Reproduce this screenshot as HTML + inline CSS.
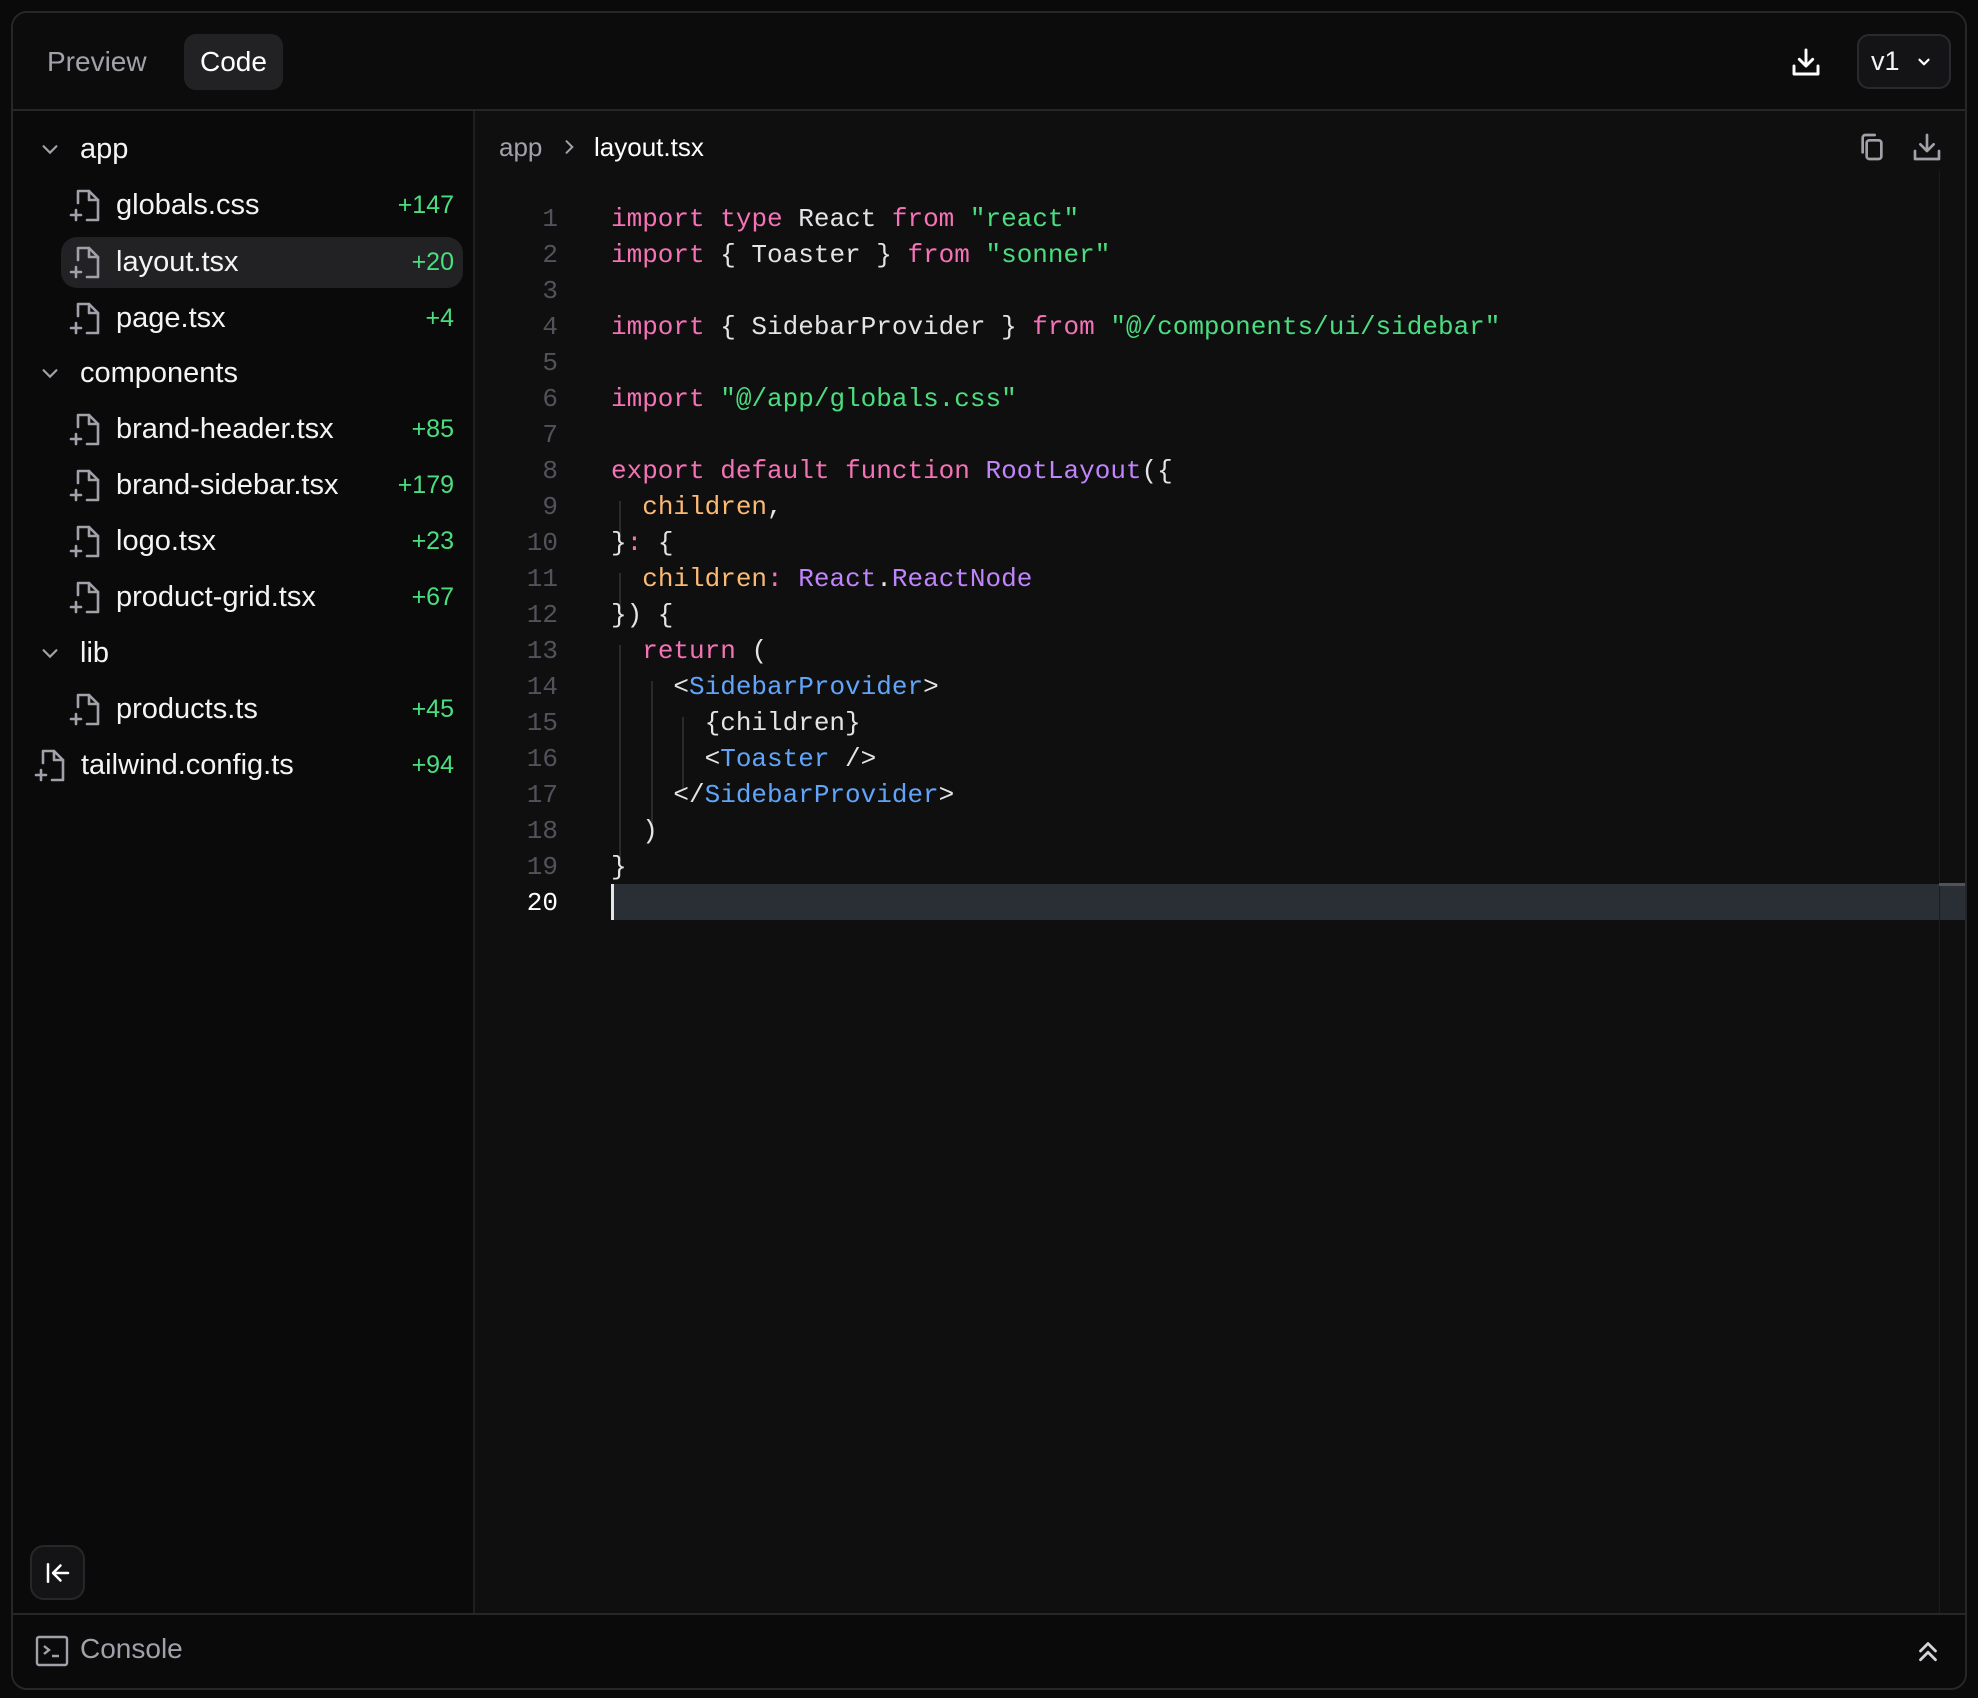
<!DOCTYPE html>
<html><head><meta charset="utf-8"><style>
*{margin:0;padding:0;box-sizing:border-box}
body{width:1978px;height:1698px;background:#0a0a0a;font-family:"Liberation Sans",sans-serif;color:#f4f4f5;position:relative;overflow:hidden}
.frame{position:absolute;left:11px;top:11px;width:1956px;height:1679px;border:2px solid #27272a;border-radius:16px;background:#0a0a0a;overflow:hidden}
.top{position:absolute;left:0;top:0;right:0;height:98px;border-bottom:2px solid #27272a;background:#0c0c0c}
.tab{position:absolute;top:21px;height:56px;line-height:56px;font-size:28px;padding:0 16px;border-radius:12px}
.side{position:absolute;left:0;top:98px;width:462px;bottom:75px;border-right:2px solid #1f1f22;background:#0a0a0a}
.code{position:absolute;left:462px;top:98px;right:0;bottom:75px;background:#0f0f0f}
.bot{position:absolute;left:0;right:0;bottom:0;height:75px;border-top:2px solid #27272a;background:#0a0a0a}
.row{position:absolute;left:0;width:462px;height:50px;font-size:29px;line-height:50px}
.row .n{position:absolute;right:21px;color:#4ade80;font-size:25px}
.sel{position:absolute;left:48px;width:402px;height:51px;background:#222224;border-radius:16px}
.ln{position:absolute;width:83px;left:0;text-align:right;font-family:"Liberation Mono",monospace;font-size:26px;color:#52525b}
.cl{position:absolute;left:136px;font-family:"Liberation Mono",monospace;font-size:26px;white-space:pre;color:#e4e4e7}
.k{color:#f472b6}.s{color:#4ade80}.o{color:#fdba74}.p{color:#c084fc}.b{color:#60a5fa}
.g{position:absolute;width:2px;background:#2a2a2e}
.fi{position:absolute;top:9px}
</style></head><body>
<div class="frame">
 <div class="top">
  <div class="tab" style="left:18px;color:#a1a1aa">Preview</div>
  <div class="tab" style="left:171px;background:#222224;color:#fff">Code</div>
  <svg style="position:absolute;left:1777px;top:33px" width="32" height="32" viewBox="0 0 24 24" fill="none" stroke="#fff" stroke-width="2.2" stroke-linecap="round" stroke-linejoin="round"><path d="M12 3v12M7 10l5 5 5-5M3 15v6h18v-6"/></svg>
  <div style="position:absolute;left:1844px;top:21px;width:94px;height:55px;border:2px solid #2a2a2e;border-radius:12px;background:#141416;font-size:27px;line-height:51px;padding-left:12px">v1<svg style="position:absolute;left:56px;top:17px" width="18" height="18" viewBox="0 0 24 24" fill="none" stroke="#fff" stroke-width="3" stroke-linecap="round" stroke-linejoin="round"><path d="M6 9l6 6 6-6"/></svg></div>
 </div>
 <div class="side" id="side">
  <div class="sel" style="top:126px"></div>
  <div style="position:absolute;left:17px;top:1434px;width:55px;height:55px;border:2px solid #27272a;border-radius:14px;background:#141416"><svg style="position:absolute;left:11px;top:11px" width="30" height="30" viewBox="0 0 24 24" fill="none" stroke="#fff" stroke-width="2" stroke-linecap="round" stroke-linejoin="round"><path d="M4 5v14M20 12H9M14 6l-6 6 6 6"/></svg></div>
 </div>
 <div class="code">
  <div style="position:absolute;left:24px;top:20px;font-size:26px;line-height:32px;color:#a1a1aa">app</div>
  <svg style="position:absolute;left:84px;top:26px" width="20" height="20" viewBox="0 0 24 24" fill="none" stroke="#a1a1aa" stroke-width="2.4" stroke-linecap="round"><path d="M9 5l7 7-7 7"/></svg>
  <div style="position:absolute;left:119px;top:20px;font-size:26px;line-height:32px;color:#fff">layout.tsx</div>
  <svg style="position:absolute;left:1381px;top:20px" width="32" height="32" viewBox="0 0 24 24" fill="none" stroke="#a1a1aa" stroke-width="2" stroke-linecap="round" stroke-linejoin="round"><rect x="8" y="7" width="11" height="14" rx="2"/><path d="M5 16V5a2 2 0 0 1 2-2h7"/></svg>
  <svg style="position:absolute;left:1436px;top:20px" width="32" height="32" viewBox="0 0 24 24" fill="none" stroke="#a1a1aa" stroke-width="2" stroke-linecap="round" stroke-linejoin="round"><path d="M12 3v12M7 10l5 5 5-5M3 15v6h18v-6"/></svg>
  <div style="position:absolute;left:136px;top:773px;width:1366px;height:36px;background:#2a2e35"></div>
  <div style="position:absolute;left:136px;top:773px;width:3px;height:36px;background:#e4e4e7"></div>
  <div style="position:absolute;right:0;top:60px;width:26px;bottom:0;border-left:1px solid #1c1c1f"></div>
  <div style="position:absolute;right:0;top:772px;width:26px;height:3px;background:#52525b"></div>
  <div class="g" style="left:144px;top:390px;height:36px"></div>
  <div class="g" style="left:144px;top:462px;height:36px"></div>
  <div class="g" style="left:144px;top:534px;height:216px"></div>
  <div class="g" style="left:176px;top:570px;height:144px"></div>
  <div class="g" style="left:207px;top:606px;height:72px"></div>
  <div id="lines"></div>
 </div>
 <div class="bot">
  <svg style="position:absolute;left:22px;top:20px" width="34" height="32" viewBox="0 0 34 32" fill="none" stroke="#a1a1aa" stroke-width="2.4"><rect x="2" y="2" width="30" height="28" rx="2"/><path d="M9 11l5 4-5 4M17 21h7"/></svg>
  <div style="position:absolute;left:67px;top:18px;font-size:28px;color:#a1a1aa">Console</div>
  <svg style="position:absolute;left:1900px;top:21px" width="30" height="30" viewBox="0 0 24 24" fill="none" stroke="#d4d4d8" stroke-width="2.2" stroke-linecap="round" stroke-linejoin="round"><path d="M6 12l6-6 6 6M6 19l6-6 6 6"/></svg>
 </div>
</div>
<script>
var F='<svg class="fi" style="left:XXpx" width="32" height="34" viewBox="0 0 32 34" fill="none" stroke="#a1a1aa" stroke-width="2.6" stroke-linejoin="round" stroke-linecap="round"><path d="M9 14V2h11l9 9v20H18"/><path d="M20 2v9h9"/><path d="M2 26h10M7 21v10"/></svg>';
var CH='<svg style="position:absolute;left:26px;top:14px" width="22" height="22" viewBox="0 0 24 24" fill="none" stroke="#a1a1aa" stroke-width="2.4" stroke-linecap="round"><path d="M5 9l7 7 7-7"/></svg>';
var R=[[13,'f','app'],[69,1,'globals.css','+147'],[126,1,'layout.tsx','+20'],[182,1,'page.tsx','+4'],[237,'f','components'],[293,1,'brand-header.tsx','+85'],[349,1,'brand-sidebar.tsx','+179'],[405,1,'logo.tsx','+23'],[461,1,'product-grid.tsx','+67'],[517,'f','lib'],[573,1,'products.ts','+45'],[629,0,'tailwind.config.ts','+94']];
var s='';
R.forEach(function(r){s+='<div class="row" style="top:'+r[0]+'px">';
if(r[1]=='f')s+=CH+'<span style="position:absolute;left:67px">'+r[2]+'</span>';
else{var x=r[1]?56:21;s+=F.replace('XX',x)+'<span style="position:absolute;left:'+(x+47)+'px">'+r[2]+'</span><span class="n">'+r[3]+'</span>';}
s+='</div>';});
document.getElementById('side').insertAdjacentHTML('beforeend',s);
var L=[
'<span class="k">import</span> <span class="k">type</span> React <span class="k">from</span> <span class="s">"react"</span>',
'<span class="k">import</span> { Toaster } <span class="k">from</span> <span class="s">"sonner"</span>',
'',
'<span class="k">import</span> { SidebarProvider } <span class="k">from</span> <span class="s">"@/components/ui/sidebar"</span>',
'',
'<span class="k">import</span> <span class="s">"@/app/globals.css"</span>',
'',
'<span class="k">export</span> <span class="k">default</span> <span class="k">function</span> <span class="p">RootLayout</span>({',
'  <span class="o">children</span>,',
'}<span class="k">:</span> {',
'  <span class="o">children</span><span class="k">:</span> <span class="p">React</span>.<span class="p">ReactNode</span>',
'}) {',
'  <span class="k">return</span> (',
'    &lt;<span class="b">SidebarProvider</span>&gt;',
'      {children}',
'      &lt;<span class="b">Toaster</span> /&gt;',
'    &lt;/<span class="b">SidebarProvider</span>&gt;',
'  )',
'}',
''];
var h='';
for(var i=0;i<L.length;i++){var t=206+i*36-98;
h+='<div class="ln" style="top:'+(t-15)+'px;line-height:30px;'+(i==19?'color:#fff':'')+'">'+(i+1)+'</div>';
h+='<div class="cl" style="top:'+(t-15)+'px;line-height:30px">'+L[i]+'</div>';}
document.getElementById('lines').innerHTML=h;
</script>
</body></html>
